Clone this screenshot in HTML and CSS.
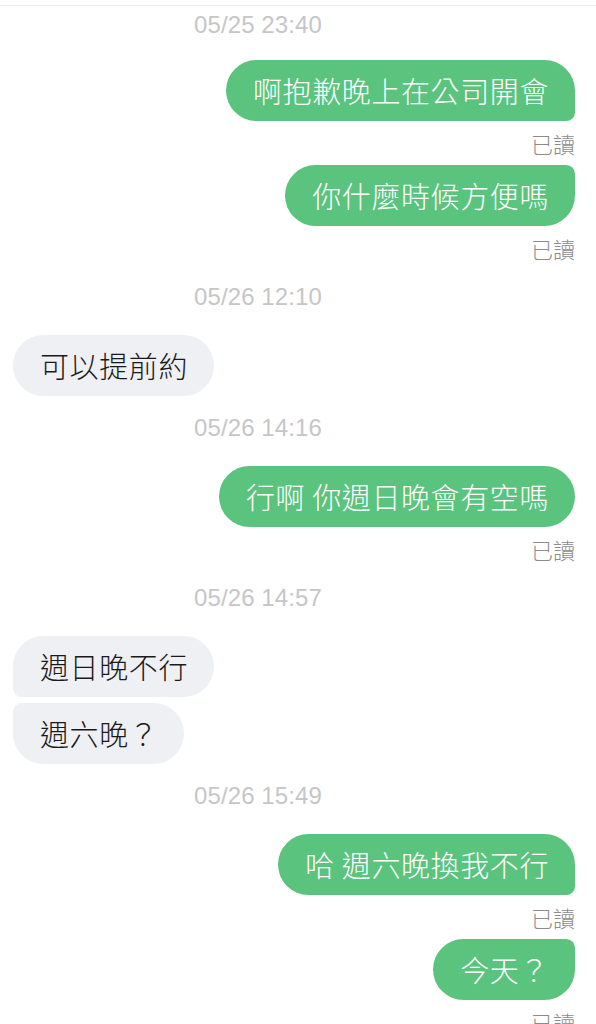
FILE: index.html
```html
<!DOCTYPE html>
<html lang="zh-Hant">
<head>
<meta charset="utf-8">
<title>Chat</title>
<link rel="stylesheet" href="styles.css">
</head>
<body>
<div class="chat">
  <div class="topline"></div>
  <div class="time first">05/25 23:40</div>
  <div class="msg sent grp-first">啊抱歉晚上在公司開會</div>
  <div class="read">已讀</div>
  <div class="msg sent grp-last">你什麼時候方便嗎</div>
  <div class="read">已讀</div>
  <div class="time">05/26 12:10</div>
  <div class="msg recv">可以提前約</div>
  <div class="time">05/26 14:16</div>
  <div class="msg sent">行啊 你週日晚會有空嗎</div>
  <div class="read">已讀</div>
  <div class="time">05/26 14:57</div>
  <div class="msg recv grp-first">週日晚不行</div>
  <div class="msg recv grp-last">週六晚？</div>
  <div class="time">05/26 15:49</div>
  <div class="msg sent grp-first">哈 週六晚換我不行</div>
  <div class="read">已讀</div>
  <div class="msg sent grp-last">今天？</div>
  <div class="read">已讀</div>
</div>
</body>
</html>
```

FILE: styles.css
```css
html, body {
  margin: 0;
  padding: 0;
  background: #ffffff;
}

body {
  width: 596px;
  height: 1024px;
  overflow: hidden;
  font-family: "Noto Sans CJK TC", "Noto Sans", sans-serif;
}

.chat {
  display: flex;
  flex-direction: column;
  padding: 0 21px 0 13px;
}

.topline {
  margin: 5px -21px 0 -13px;
  height: 1px;
  background: #ececec;
}

.time {
  align-self: center;
  margin-right: 72px;
  font-family: "Liberation Sans", Arial, sans-serif;
  font-size: 24px;
  letter-spacing: 0.1px;
  line-height: 28px;
  color: #c6c6c8;
  margin-top: 20px;
}

.time.first {
  margin-top: 5px;
}

.msg {
  font-size: 29px;
  font-weight: 300;
  letter-spacing: 0.6px;
  line-height: 61px;
  height: 61px;
  padding: 0 26px 0 27px;
  border-radius: 31px;
  white-space: nowrap;
}

.sent {
  align-self: flex-end;
  background: #5ac37d;
  color: #ffffff;
}

.recv {
  align-self: flex-start;
  background: #eff0f4;
  color: #1a1a1a;
}

.sent.grp-first { border-bottom-right-radius: 9px; }
.sent.grp-last { border-top-right-radius: 9px; }
.recv.grp-first { border-bottom-left-radius: 9px; }
.recv.grp-last { border-top-left-radius: 9px; }

.read {
  align-self: flex-end;
  font-size: 22px;
  font-weight: 300;
  line-height: 26px;
  color: #8b8b8d;
}

.time + .msg { margin-top: 24px; }
.time.first + .msg { margin-top: 21px; }
.msg + .read { margin-top: 9px; }
.read + .msg { margin-top: 9px; }
.msg + .msg { margin-top: 6px; }
.read + .time { margin-top: 22px; }
.msg + .time { margin-top: 18px; }
```
